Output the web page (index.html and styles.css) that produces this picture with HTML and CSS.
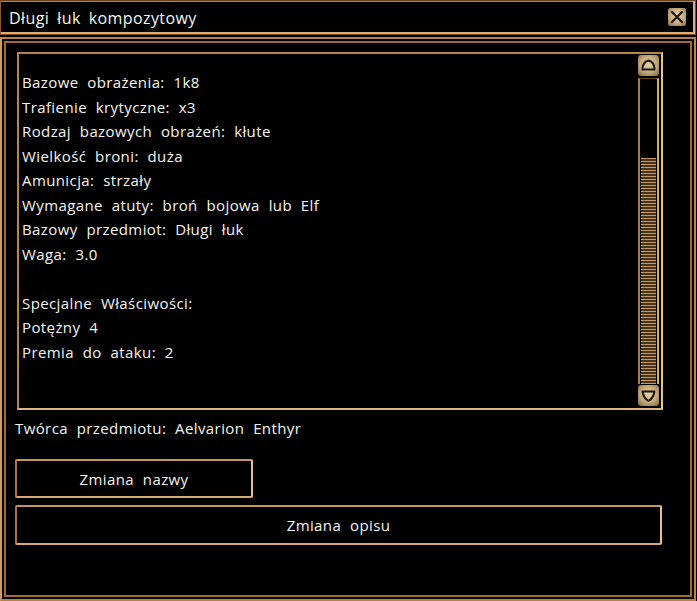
FILE: index.html
```html
<!DOCTYPE html>
<html lang="pl">
<head>
<meta charset="utf-8">
<title>Długi łuk kompozytowy</title>
<link rel="stylesheet" href="styles.css">
</head>
<body>
<div class="window">
  <div class="titlebar">
    <span class="title">Długi łuk kompozytowy</span>
    <div class="close">
      <svg width="18" height="18" viewBox="0 0 18 18"><path d="M4 4 L14 14 M14 4 L4 14" stroke="#1c1712" stroke-width="2.2" stroke-linecap="round"/></svg>
    </div>
  </div>
  <div class="panel">
    <div class="textbox">
      <div class="content">
        <div class="line">Bazowe obrażenia: 1k8</div>
        <div class="line">Trafienie krytyczne: x3</div>
        <div class="line">Rodzaj bazowych obrażeń: kłute</div>
        <div class="line">Wielkość broni: duża</div>
        <div class="line">Amunicja: strzały</div>
        <div class="line">Wymagane atuty: broń bojowa lub Elf</div>
        <div class="line">Bazowy przedmiot: Długi łuk</div>
        <div class="line">Waga: 3.0</div>
        <div class="line">&nbsp;</div>
        <div class="line">Specjalne Właściwości:</div>
        <div class="line">Potężny 4</div>
        <div class="line">Premia do ataku: 2</div>
      </div>
      <div class="scrollbar">
        <div class="sbtn">
          <svg width="21" height="21" viewBox="0 0 21 21"><path d="M4.5 14.5 Q4.5 7 10.5 5.5 Q16.5 7 16.5 14.5 Z" fill="none" stroke="#1c1712" stroke-width="2" stroke-linejoin="round"/></svg>
        </div>
        <div class="track">
          <div class="thumb"></div>
        </div>
        <div class="sbtn">
          <svg width="21" height="21" viewBox="0 0 21 21"><path d="M4.5 6.5 L16.5 6.5 Q15.5 13 10.5 16 Q5.5 13 4.5 6.5 Z" fill="none" stroke="#1c1712" stroke-width="2" stroke-linejoin="round"/></svg>
        </div>
      </div>
    </div>
    <div class="creator">Twórca przedmiotu: Aelvarion Enthyr</div>
    <div class="btn btn-short">Zmiana nazwy</div>
    <div class="btn btn-wide">Zmiana opisu</div>
  </div>
</div>
</body>
</html>
```
FILE: styles.css
```css
html, body {
  margin: 0;
  padding: 0;
  background: #000;
}
body {
  width: 697px;
  height: 601px;
  overflow: hidden;
  font-family: "Open Sans", "DejaVu Sans", sans-serif;
  color: #f6f4ee;
}
.window {
  width: 697px;
  height: 601px;
  display: flex;
  flex-direction: column;
}
.titlebar {
  box-sizing: border-box;
  width: 696px;
  height: 35px;
  border: 1px solid #7a4c22;
  border-top-color: #6a4018;
  border-left-color: #8a5a2a;
  box-shadow: inset 0 -2px 0 #e0ad70, inset -2px 0 0 #e0ad70, inset 0 1px 0 #b9864e;
  display: flex;
  align-items: center;
  justify-content: space-between;
  padding: 0 9px 0 8px;
}
.title {
  font-size: 16px;
  word-spacing: 3.5px;
  letter-spacing: 0.4px;
  margin-top: 1px;
}
.close {
  width: 18px;
  height: 18px;
  margin-top: -1px;
  background: radial-gradient(circle at 50% 45%, #e8d6ae 0%, #c6ab7c 55%, #7d6442 100%);
  border-radius: 2px;
}
.close svg { display: block; }
.panel {
  box-sizing: border-box;
  margin-top: 2px;
  width: 696px;
  height: 564px;
  border: 2px solid #b98048;
  border-left-color: #d09a5a;
  box-shadow: inset 0 0 0 2px #000, inset 0 0 0 4px #a46c34;
  padding: 13px 30px 0 13px;
  display: flex;
  flex-direction: column;
}
.textbox {
  box-sizing: border-box;
  margin-left: 2px;
  width: 646px;
  height: 358px;
  border: 2px solid #b8844a;
  border-right-color: #e8c08a;
  border-bottom-color: #e0b47c;
  display: flex;
}
.content {
  flex: 1;
  padding: 16px 0 0 3px;
  font-size: 15px;
  word-spacing: 4.5px;
  letter-spacing: 0.4px;
}
.line {
  height: 24.5px;
  line-height: 24.5px;
}
.scrollbar {
  width: 21px;
  margin: 1px 2px 2px 0;
  display: flex;
  flex-direction: column;
}
.sbtn {
  width: 21px;
  height: 21px;
  background: radial-gradient(circle at 50% 45%, #e6d2a6 0%, #c2a676 55%, #75603e 100%);
  border-radius: 3px;
}
.sbtn svg { display: block; }
.track {
  flex: 1;
  margin: 2px 0 1px;
  box-sizing: border-box;
  border-left: 2px solid #b07a42;
  border-right: 2px solid #d8a86c;
  border-top: 1px solid #6a4420;
  display: flex;
  flex-direction: column;
  justify-content: flex-end;
  padding: 0 1px;
}
.thumb {
  height: 226px;
  background: repeating-linear-gradient(180deg, #c09a6a 0px, #c09a6a 1.5px, #4a3218 1.5px, #4a3218 3px);
}
.creator {
  margin-top: 8px;
  font-size: 15px;
  word-spacing: 4.5px;
  letter-spacing: 0.4px;
  line-height: 20px;
}
.btn {
  box-sizing: border-box;
  display: flex;
  align-items: center;
  justify-content: center;
  border: 2px solid #a87440;
  border-top-color: #c8965c;
  border-right-color: #e8c08a;
  border-bottom-color: #d8aa70;
  font-size: 15px;
  word-spacing: 4.5px;
  letter-spacing: 0.4px;
  border-radius: 2px;
}
.btn-short {
  margin-top: 21px;
  width: 238px;
  height: 39px;
}
.btn-wide {
  margin-top: 7px;
  width: 647px;
  height: 40px;
}
```
